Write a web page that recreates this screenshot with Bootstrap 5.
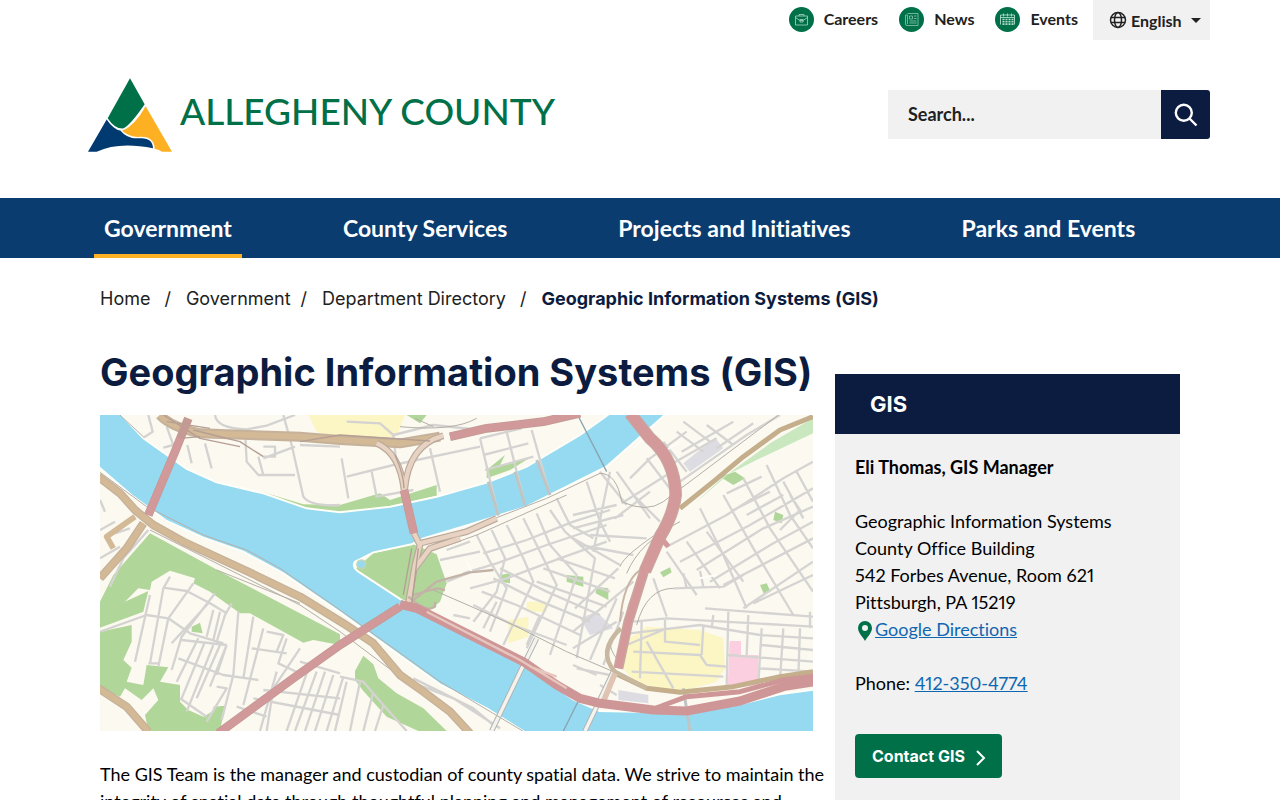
<!DOCTYPE html>
<html lang="en">
<head>
<meta charset="utf-8">
<meta name="viewport" content="width=device-width, initial-scale=1">
<title>Geographic Information Systems (GIS) - Allegheny County</title>
<link href="https://cdn.jsdelivr.net/npm/bootstrap@5.3.0/dist/css/bootstrap.min.css" rel="stylesheet">
<style>
  :root { --navy:#0c1c40; --blue:#0a3c70; --green:#007048; --gold:#fcb022; --grey:#f1f1f1; }
  body { font-family:Lato, sans-serif; font-size:18px; line-height:27px; color:#000; font-variant-ligatures:none; font-variant-numeric:proportional-nums; }
  .inter { font-family:Inter, sans-serif; }
  .utilities { gap:21px; margin-right:15px; padding-bottom:2px; }
  .util-link { gap:10px; font-size:16px; font-weight:700; line-height:24px; color:#212121; text-decoration:none; }
  .lang-btn { height:40px; width:117px; padding:0 0 0 16px; background:var(--grey); border:0; font-size:16px; font-weight:700; color:#212121; }
  .lang-btn::after { margin-left:9px; border-width:5px 5px 0; }
  .brand-row { padding:38px 0 46px 18px; }
  .brand-name { font-size:37px; font-weight:500; line-height:40px; padding-bottom:8px; color:var(--green); }
  .search-form { width:322px; height:49px; margin-top:12px; }
  .search-form input { border:0; border-radius:0; background:var(--grey); padding:0 20px; font-size:18px; font-weight:700; color:#212121; }
  .search-form input::placeholder { color:#212121; opacity:1; }
  .search-form button { width:49px; flex:none; padding:0; border:0; border-radius:0 3px 3px 0; background:var(--navy); }
  .main-nav { background:var(--blue); }
  .main-nav ul { gap:16px 91px; padding-left:24px; }
  .main-nav a { display:block; height:60px; padding:0 10px; font-size:23px; font-weight:700; line-height:60px; color:#fff; text-decoration:none; }
  .main-nav a.active { border-bottom:4px solid var(--gold); }
  .page-body { padding:27px 30px 40px; }
  .crumbs { font-size:18px; line-height:27px; color:#212121; }
  .crumbs a { color:inherit; text-decoration:none; }
  .crumbs span { margin:0 15px 0 14px; }
  .crumbs .tight { margin-left:10px; }
  .crumbs .here { font-weight:700; color:var(--navy); }
  .page-cols { gap:22px; margin-top:39px; }
  .page-title { font-size:38px; font-weight:700; line-height:42px; color:var(--navy); margin-bottom:22px; }
  .intro { margin:30px -16px 0 0; }
  .aside-col { flex:0 0 345px; margin-top:23px; background:var(--grey); }
  .aside-head { background:var(--navy); color:#fff; font-size:22px; font-weight:700; line-height:60px; padding-left:35px; margin:0; }
  .aside-body { padding:20px 20px 40px; }
  .aside-body address { margin:27px 0; line-height:27px; }
  .aside-body a:not(.btn) { color:#0f67b1; }
  .contact-btn { background:var(--green); color:#fff; font-size:16px; font-weight:700; line-height:24px; margin-top:21px; padding:10px 13px 10px 17px; border:0; border-radius:4px; }
</style>
</head>
<body>
<header class="container px-0">
  <div class="d-flex justify-content-end">
    <div class="utilities d-flex align-items-center">
      <a class="util-link d-flex align-items-center" href="#"><svg width="25" height="25" viewBox="0 0 25 25" fill="none" stroke="#a7d5c3" stroke-width=".8"><circle cx="12.500" cy="12.500" r="12.500" fill="#007048" stroke="none"/><path d="M6.500 9h12v9h-12zM10 9V7.500h5V9M6.500 10.500l4.500 3h3l4.500-3M11 12.500h3v2.500h-3z"/></svg>Careers</a>
      <a class="util-link d-flex align-items-center" href="#"><svg width="25" height="25" viewBox="0 0 25 25" fill="none" stroke="#8fc8b2" stroke-width=".8"><circle cx="12.500" cy="12.500" r="12.500" fill="#007048" stroke="none"/><path d="M8.500 6.500h10.500v12H8q-1.500 0-1.500-1.500V8h2v9M10.500 9h3v3h-3zM15 9h2.500M15 11.500h2.500M10.500 14h7M10.500 16h7"/></svg>News</a>
      <a class="util-link d-flex align-items-center" href="#"><svg width="25" height="25" viewBox="0 0 25 25" fill="none" stroke="#b3ddcc" stroke-width=".9"><circle cx="12.500" cy="12.500" r="12.500" fill="#007048" stroke="none"/><path d="M5.500 17.500v-9.500h14v9.500M5.500 10.500h14M8.500 6.500v3M12.500 6.500v3M16.500 6.500v3"/><path stroke-width="1.600" stroke-dasharray="2 1" d="M7.500 12.500h11M7.500 14.800h11M7.500 17.100h11"/></svg>Events</a>
    </div>
    <div class="dropdown">
      <button class="lang-btn dropdown-toggle text-start d-flex align-items-center" type="button" data-bs-toggle="dropdown" aria-expanded="false"><svg class="me-1" width="18" height="18" viewBox="0 0 18 18" fill="none" stroke="#212121" stroke-width="1.500"><circle cx="9" cy="9" r="7.500"/><ellipse cx="9" cy="9" rx="3.500" ry="7.500"/><path d="M2 6.500h14M2 11.500h14"/></svg>English</button>
      <ul class="dropdown-menu"><li><a class="dropdown-item" href="#">English</a></li></ul>
    </div>
  </div>
  <div class="brand-row d-flex flex-wrap justify-content-between align-items-start">
    <a href="#" class="d-flex text-decoration-none align-items-center gap-2">
      <svg width="84" height="74" viewBox="24 23 252 221" aria-hidden="true"><path fill="#007048" d="M150 23L194 101Q151 164 129 174Q104 175 83 143Z"/><path fill="#fcb022" d="M197 107L276 244H246Q238 238 224 235Q223 200 184 199C158 201 145 195 126 181Q164 166 197 107"/><path fill="#003a70" d="M80 147Q101 178 121 180C139 200 155 205 180 203Q218 201 219 233Q115 212 50 244H24Z"/></svg>
      <span class="brand-name">ALLEGHENY COUNTY</span>
    </a>
    <form class="search-form d-flex" role="search">
      <input class="form-control shadow-none" type="search" placeholder="Search..." aria-label="Search">
      <button type="submit" aria-label="Submit search"><svg class="d-block" width="49" height="49" viewBox="0 0 49 49" fill="none" stroke="#fff" stroke-width="2.400"><circle cx="22.800" cy="22.800" r="8"/><path d="M28.500 28.500l7 7"/></svg></button>
    </form>
  </div>
</header>
<nav class="main-nav" aria-label="Main">
  <div class="container px-0">
    <ul class="list-unstyled d-flex flex-wrap mb-0">
      <li><a class="active" href="#">Government</a></li>
      <li><a href="#">County Services</a></li>
      <li><a href="#">Projects and Initiatives</a></li>
      <li><a href="#">Parks and Events</a></li>
    </ul>
  </div>
</nav>
<main class="container px-0">
  <div class="page-body">
    <nav class="crumbs inter d-flex flex-wrap" aria-label="Breadcrumb">
      <a href="#">Home</a><span>/</span><a href="#">Government</a><span class="tight">/</span><a href="#">Department Directory</a><span>/</span><a class="here" href="#">Geographic Information Systems (GIS)</a>
    </nav>
    <div class="page-cols d-flex align-items-start">
      <article class="flex-fill">
        <h1 class="page-title inter">Geographic Information Systems (GIS)</h1>
        <svg class="d-block w-100 h-auto" viewBox="0 0 2139 948" role="img" aria-label="Map of downtown Pittsburgh" fill="none">
          <path fill="#fbf9f0" d="M0 0h2139v948H0z"/>
          <!-- built-up and civic areas -->
          <path fill="#fcf6c4" d="M625 0H915L890 65L720 75L650 50ZM1560 690L1640 635L1800 645L1870 670L1875 760L1850 800L1740 830L1610 805L1560 750ZM1280 560h60v30h-60zM1225 615l60-10v60l-60 20z"/>
          <path fill="#fbcfe0" d="M1889 678h34v42h52v90l-92 8z"/>
          <path fill="#dddce3" d="M1750 145L1845 68L1870 100L1770 170ZM1440 610l50-20 50 50-70 20zM1555 825l90 15v25l-90-10z"/>
          <!-- parks -->
          <g fill="#b1d69a">
            <path d="M150 355L380 480L720 658V690L640 675L610 683L450 595L420 595L330 530L280 505L285 490L210 467L155 500L150 525L115 520L75 560L145 528L130 590L0 638V560L40 480Z"/>
            <path d="M0 650L95 630V680L70 735L95 758L80 800L130 810L140 750L205 757L180 800L240 810L240 860L265 885L310 905L340 888V875L375 872L360 948H145L135 900L175 855L160 820L125 855L75 820L60 845L0 818Z"/>
            <path d="M790 722L820 748L835 790L890 835L970 880L1040 948H955L860 905L790 828L765 795V768Z"/>
            <path d="M820 415L940 388L1010 418L1040 505L1020 560L990 585L910 558L760 468Z"/>
            <path d="M485 230L610 268L720 270L840 235L870 255L1010 210V242L870 275L720 292L620 280Z"/>
            <path d="M1160 165L1215 120L1200 150L1290 128L1230 165L1160 190ZM920 0h60l-20 25zM1860 185l45-15 30 20-35 20zM2025 290l25 10-5 25-25-10zM1680 472l30-15 5 15-25 15zM1980 510l20-5 12 25-20 8zM275 635l25-12 8 32-33-5zM1200 480l30-5v30l-30-5zM1490 515l35 5v35l-38-20zM1400 480l50 5v30l-50-15z"/>
          </g>
          <path fill="#c9e8bf" d="M1785 265L1900 165L2010 85L2139 10V55L1980 130L1870 185Z"/>
          <!-- rivers -->
          <path fill="#96daf1" stroke="#fffef8" stroke-width="6" d="M60 -5L130 70L260 162L350 202L490 235L620 280L720 292L870 275L1010 245L1160 203L1280 155L1440 60L1530 -5H1700L1519 155L1419 205L1280 275L1120 325L970 370L935 388L820 412L765 440Q755 455 775 470L910 558L1000 600L1270 748L1419 853L1499 888L1749 893L1919 868L2039 838L2145 823V955H1280L1160 880L1020 808L720 592L550 475L430 410L310 368L200 318L100 245L-5 155V-5Z"/>
          <circle cx="784" cy="448" r="13" fill="#96daf1" stroke="#bed6b4" stroke-width="5"/>
          <!-- local streets -->
          <g stroke="#d5d3d1" stroke-width="7" stroke-linejoin="round">
            <path d="M145 0L158 50L130 68M200 35L220 90L190 98M262 90L275 145M315 85L335 160M345 0Q350 40 440 43L500 32L585 0M435 45L440 140L475 180L585 180M475 125L490 180M550 0L575 90L610 245Q630 275 720 270M490 95h35v30h-35M585 95L490 130M600 90L720 95"/>
            <path d="M725 130L745 250M740 185L880 150L1140 95M815 170L830 245L940 225M990 100L1020 230M880 60L890 150M740 20L840 25L880 60M880 60L1000 30L1140 45M1140 70L1195 300M1220 50L1275 270M1295 45L1350 240M1140 70L1265 40M1150 120L1285 85M1155 165L1300 125"/>
            <path d="M30 515L70 430L145 345M0 430L60 395M0 255L15 290M0 345L45 320M45 355L90 340"/>
            <path d="M0 650L140 600L205 610L270 655L370 685M190 518L260 528L330 565L380 595M210 485L190 520L150 745M150 540L105 740M205 610L175 755M280 505L205 610M325 565L215 685M345 535L245 665L215 765M395 565L375 600L350 680M340 585L320 665M360 590L340 675M235 730L370 780L475 795M245 675L380 690M380 690L330 815M360 690L290 850M340 690L260 890M315 680L245 850M295 670L230 800M415 590L400 780L365 915M460 605L430 790M490 640L430 870M455 700L560 715M500 650L550 660L530 710M560 670L535 745L610 780M600 700L520 820L500 948M380 690L350 780M600 740L720 775M240 850L320 905M350 815L380 820L320 920M145 745h30"/>
            <path d="M625 760L560 948M650 770L585 948M675 770L615 948M700 780L645 948M730 785L680 948M490 825L720 850M460 850L720 900M410 875L500 905M530 770L480 948M740 800L705 948M780 800L750 948M820 830L790 948M850 870L825 948M720 785L790 800L850 870L920 948"/>
            <path d="M940 790L1020 830L1120 880L1180 930M930 800L1060 850L1200 940"/>
          </g>
          <g stroke="#d6d4d2" stroke-width="7" stroke-linejoin="round">
            <path d="M1040 405L1110 380M1020 435L1140 410M1130 360L1170 440L1220 520L1170 650M1175 345L1215 430L1190 530L1120 620M1220 330L1270 430L1300 500L1210 690M1270 310L1310 390L1370 510L1280 700M1310 295L1350 390L1430 480L1350 720M1350 285L1395 350L1485 430L1430 730M1370 250L1410 330L1480 370M1090 475L1190 445L1340 390L1520 330M1110 520L1220 490L1380 430L1520 380M1150 415L1280 375L1420 320L1530 285M1040 500L1140 460M1120 570L1240 630L1400 690M1145 530L1250 570L1440 660M1180 490L1300 550L1470 620M1200 460L1340 530L1500 600M1310 500L1520 575M1330 460L1530 530M1370 430L1545 490M1419 370L1560 450M1110 610L1060 600M1150 640L1190 560M1280 690L1320 600"/>
            <path d="M1425 580L1555 460M1419 650L1600 500M1470 735L1550 550M1510 750L1570 590M1419 700L1550 620M1430 760L1530 780"/>
            <path d="M1460 200L1500 320L1530 380M1500 170L1580 270M1550 170L1650 310M1545 310L1650 230M1565 265L1700 180M1590 190L1650 130L1760 50M1600 240L1680 320M1640 130L1740 260M1690 80L1760 170M1730 50L1810 110M1750 20L1830 80M1820 30L1900 90M1710 150L1850 70M1740 200L1940 60L2040 0M1745 110L1900 20M1850 100L1960 25M1419 300L1550 270M1419 340L1570 300M1530 170L1480 410M1440 390L1600 420M1470 360L1640 370"/>
            <path d="M1700 395L1880 300L2050 190L2139 140M1740 440L1950 330L2139 220M1790 465L1990 340L2139 275M1830 500L2020 385L2139 320M1870 510L2139 370M1930 580L2139 440M1960 565L2139 480M1800 280L1870 420L1940 580M1870 240L1960 400L2080 600M1930 190L2010 340L2139 530M2000 150L2070 300L2139 400M2050 200L2110 310M2090 170L2139 260M1700 410L1790 540M1760 380L1860 520M1820 350L1930 500M1880 235L1985 185M1900 285L2010 230M1940 300L2050 240M2040 345L2100 285L2070 240"/>
            <path d="M1720 520L1870 515L1930 480M1660 490L1700 605M1750 475L1760 520M1800 468L1810 515M1815 580L2139 605M1600 620L1700 610L2139 635M1590 655L1800 630L1980 660L2139 670M1580 690L1700 640M1600 710L1800 720L1820 750L1880 755M1810 630L1805 720M1695 615V680L1800 690M1885 590L1880 815M1945 600L1940 720M1985 640L1975 810M2050 640L2040 795M2100 640L2095 785M2130 590V640M1840 600L1835 640M1885 720L2139 740M1980 760L2139 770M1985 690L2139 705M1640 680L1720 820M1625 620L1620 790M1595 770L1870 785M1490 780L1419 750M1500 810L1550 840"/>
          </g>
          <g stroke="#fffdf8" stroke-width="6"><path d="M1640 60L1600 100M1700 105L1740 80M1800 490L1850 480M1100 440L1120 480"/></g>
          <!-- bridges -->
          <path stroke="#bfc5c4" stroke-width="9" d="M1165 200L1195 302M1245 170L1275 272M1310 135L1350 240M1750 820L1770 948"/>
          <path stroke="#89a4af" stroke-width="4" d="M1433 0L1520 170M1435 858L1390 948"/>
          <path stroke="#b1b4b3" stroke-width="16" d="M1310 670L1268 755L1175 948M1540 770L1455 948"/>
          <path stroke="#f5f3ed" stroke-width="10" d="M1310 670L1268 755L1175 948M1540 770L1455 948"/>
          <!-- rail lines and ramps -->
          <g stroke="#b4afa7" stroke-width="3">
            <path d="M0 172L140 275L310 360L440 405L540 460L720 585L1020 800L1280 955M150 345L420 480L600 570L720 650L880 770M60 0L130 65M350 465L450 505L600 565"/>
            <path d="M970 380L1120 335L1340 250L1500 175Q1550 175 1565 260Q1640 295 1690 260L2035 0M990 410L1130 360L1400 240M1000 525L1240 630L1400 710L1540 770L1640 820M900 35Q1060 50 1130 10M945 10L1000 35"/>
            <path d="M1560 455Q1570 420 1710 330M1580 475Q1620 380 1740 320M1550 730Q1510 680 1555 650M1610 630Q1640 520 1720 520"/>
          </g>
          <!-- highways -->
          <g stroke-linejoin="round">
            <g stroke="#c6b29a" stroke-width="25">
              <path d="M-5 185L60 235L105 285L160 330L250 380L440 468L600 545L730 625L820 685L900 780L970 830L1050 890L1110 955M130 325L80 400L0 490M-5 820L80 875L145 950"/>
              <path d="M180 0Q210 35 300 55L600 65L720 75L900 85L1020 65" stroke-width="30"/>
            </g>
            <g stroke="#d3b996" stroke-width="17">
              <path d="M-5 185L60 235L105 285L160 330L250 380L440 468L600 545L730 625L820 685L900 780L970 830L1050 890L1110 955M130 325L80 400L0 490M-5 820L80 875L145 950"/>
              <path d="M180 0Q210 35 300 55L600 65L720 75L900 85L1020 65M105 305L20 365L40 400"/>
            </g>
            <g stroke="#bba99c" stroke-width="20"><path d="M830 85Q900 115 912 225M1030 62Q925 90 914 225M942 355L960 390L945 450L925 565M960 385L1100 350L1190 310M945 460L990 400L1080 370"/></g>
            <g stroke="#e8d3c2" stroke-width="13"><path d="M830 85Q900 115 912 225M1030 62Q925 90 914 225M942 355L960 390L945 450L925 565M960 385L1100 350L1190 310M945 460L990 400L1080 370"/></g>
            <path stroke="#c3b3a7" stroke-width="7" d="M940 555L1010 500L1110 472L1180 465M925 545Q980 595 1005 575V560M940 540L1010 520L1035 525"/>
            <path stroke="#b59e94" stroke-width="4" d="M190 0L300 70L420 95M200 20L330 40M280 45L420 80L490 125M240 70L300 65M600 80L720 60L990 78M885 120Q912 180 912 220M935 400L910 540M955 400L935 570"/>
            <path stroke="#c4ae8b" stroke-width="15" d="M1740 280L1840 200L1930 125L2040 45L2139 5M1545 775L1640 820L1740 832L1900 815L2040 785L2139 770"/>
            <path stroke="#c8b89f" stroke-width="13" d="M1562 640Q1490 710 1545 770L1640 820"/>
            <path stroke="#e0c4b3" stroke-width="17" d="M1545 775L1510 860"/>
            <path stroke="#c9b5a5" stroke-width="6" d="M1560 620Q1570 500 1620 465L1690 340M1580 600Q1590 540 1630 490"/>
            <g stroke="#c49a94" stroke-width="26"><path d="M265 10L225 110L145 300M912 225L942 355M1050 65L1160 40L1330 20L1440 -5M900 575L720 690L580 790L355 955"/></g>
            <g stroke="#d2999a" stroke-width="21"><path d="M240 70L225 110L145 300M912 225L942 355M1050 65L1160 40L1330 20L1440 -5M900 575L720 690L580 790L355 955"/></g>
            <g stroke="#cf9697" stroke-width="27"><path d="M900 568L950 580L1080 645L1270 740L1370 810L1440 850L1500 865L1660 885L1760 888L1920 858L2050 815L2145 800"/><path stroke-width="15" d="M1660 882L1760 845L1920 830L2050 795L2145 783"/></g>
            <path stroke="#e6c6bd" stroke-width="7" d="M980 590L1260 735L1400 820M1290 755L1370 785"/>
            <path stroke="#c8a99e" stroke-width="38" d="M1590 -5L1650 70Q1725 135 1727 240Q1720 300 1680 365L1635 468"/>
            <path stroke="#c8a99e" stroke-width="30" d="M1635 460L1585 620L1555 760"/>
            <path stroke="#d4999b" stroke-width="32" d="M1590 -5L1650 70Q1725 135 1727 240Q1720 300 1680 365L1635 468"/>
            <path stroke="#d4999b" stroke-width="22" d="M1635 460L1585 620L1555 760"/>
            <path stroke="#d4999b" stroke-width="16" d="M1680 365L1705 395"/>
          </g>
        </svg>
        <p class="intro">The GIS Team is the manager and custodian of county spatial data. We strive to maintain the integrity of spatial data through thoughtful planning and management of resources and</p>
      </article>
      <aside class="aside-col">
        <h2 class="aside-head inter">GIS</h2>
        <div class="aside-body">
          <p class="fw-bold mb-0">Eli Thomas, GIS Manager</p>
          <address>Geographic Information Systems<br>County Office Building<br>542 Forbes Avenue, Room 621<br>Pittsburgh, PA 15219<br><svg width="20" height="20" viewBox="0 0 20 20" aria-hidden="true"><path fill="#007048" fill-rule="evenodd" d="M10 20C8 16 3 12 3 7a7 7 0 0 1 14 0c0 5-5 9-7 13M10 4a3 3 0 1 0 0 6a3 3 0 0 0 0-6"/></svg><a href="#">Google Directions</a></address>
          <p>Phone: <a href="tel:4123504774">412-350-4774</a></p>
          <a class="contact-btn btn inter" href="#">Contact GIS<svg class="ms-2" width="16" height="16" viewBox="0 0 16 16" fill="none" stroke="#fff" stroke-width="2"><path d="M4 1l7 7-7 7"/></svg></a>
        </div>
      </aside>
    </div>
  </div>
</main>
<script src="https://cdn.jsdelivr.net/npm/bootstrap@5.3.0/dist/js/bootstrap.bundle.min.js"></script>
</body>
</html>
